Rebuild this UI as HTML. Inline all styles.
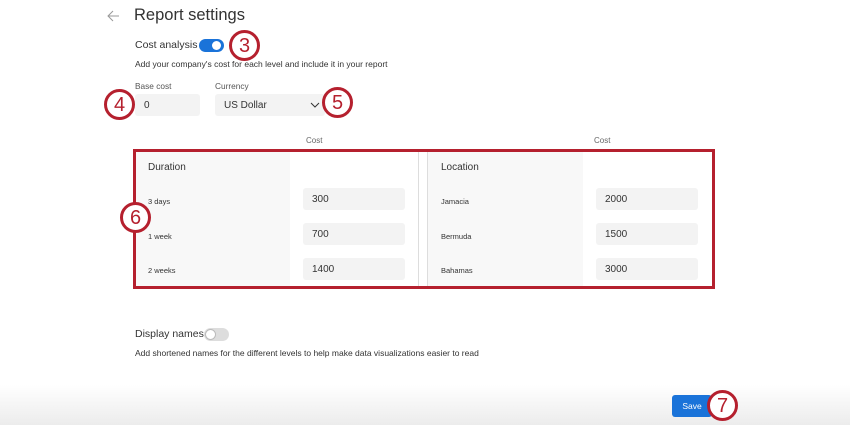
<!DOCTYPE html><html><head><style>
*{box-sizing:border-box;margin:0;padding:0}
body{width:850px;height:425px;overflow:hidden;background:#fff;font-family:"Liberation Sans",sans-serif;color:#333;position:relative}
.a{position:absolute}
.inp{position:absolute;background:#f3f3f3;border-radius:3px;font-size:10px;color:#333;padding-left:9px;display:flex;align-items:center}
.c{position:absolute;width:31px;height:31px;border:3px solid #b5202e;border-radius:50%;background:#fff;color:#b5202e;font-size:20px;display:flex;align-items:center;justify-content:center;padding-top:1px}
.s{font-size:7.5px;color:#333}
</style></head><body>
<div class="a" style="left:0;top:385px;width:850px;height:40px;background:linear-gradient(#fff,#ececec)"></div>
<svg class="a" style="left:106px;top:9px" width="14" height="14" viewBox="0 0 14 14"><path d="M13 7H2M7 2L2 7l5 5" stroke="#999" stroke-width="1" fill="none"/></svg>
<div class="a" style="left:134px;top:6px;font-size:16.5px;color:#333">Report settings</div>
<div class="a" style="left:135px;top:39px;font-size:10.5px">Cost analysis</div>
<div class="a" style="left:199px;top:39px;width:25px;height:13px;border-radius:7px;background:#1a73d9"><div class="a" style="left:13px;top:2px;width:9px;height:9px;border-radius:50%;background:#fff"></div></div>
<div class="a" style="left:135px;top:59px;font-size:8.5px">Add your company's cost for each level and include it in your report</div>
<div class="a" style="left:135px;top:81px;font-size:8.3px;color:#555">Base cost</div>
<div class="a" style="left:215px;top:81px;font-size:8.3px;color:#555">Currency</div>
<div class="inp" style="left:135px;top:94px;width:65px;height:22px">0</div>
<div class="inp" style="left:215px;top:94px;width:110px;height:22px">US Dollar</div>
<svg class="a" style="left:310px;top:101px" width="10" height="8"><path d="M1 2l4 4 4-4" stroke="#333" fill="none"/></svg>
<div class="a" style="left:306px;top:136px;font-size:8px;color:#666">Cost</div>
<div class="a" style="left:594px;top:136px;font-size:8px;color:#666">Cost</div>
<div class="a" style="left:133px;top:149px;width:582px;height:140px;border:3px solid #b5202e;overflow:hidden">
<div class="a" style="left:0;top:0;width:154px;height:140px;background:#f8f8f8"></div>
<div class="a" style="left:282px;top:0;width:1px;height:140px;background:#ddd"></div>
<div class="a" style="left:291px;top:0;width:1px;height:140px;background:#ddd"></div>
<div class="a" style="left:292px;top:0;width:155px;height:140px;background:#f8f8f8"></div>
<div class="a" style="left:12px;top:10px;font-size:10px">Duration</div>
<div class="a" style="left:305px;top:10px;font-size:10px">Location</div>
<div class="a s" style="left:12px;top:45px">3 days</div>
<div class="a s" style="left:12px;top:80px">1 week</div>
<div class="a s" style="left:12px;top:114px">2 weeks</div>
<div class="a s" style="left:305px;top:45px">Jamacia</div>
<div class="a s" style="left:305px;top:80px">Bermuda</div>
<div class="a s" style="left:305px;top:114px">Bahamas</div>
<div class="inp" style="left:167px;top:36px;width:102px;height:22px">300</div>
<div class="inp" style="left:167px;top:71px;width:102px;height:22px">700</div>
<div class="inp" style="left:167px;top:106px;width:102px;height:22px">1400</div>
<div class="inp" style="left:460px;top:36px;width:102px;height:22px">2000</div>
<div class="inp" style="left:460px;top:71px;width:102px;height:22px">1500</div>
<div class="inp" style="left:460px;top:106px;width:102px;height:22px">3000</div>
</div>
<div class="a" style="left:135px;top:328px;font-size:10.5px">Display names</div>
<div class="a" style="left:204px;top:328px;width:25px;height:13px;border-radius:7px;background:#ddd"><div class="a" style="left:1px;top:1px;width:11px;height:11px;border-radius:50%;background:#fff;border:1px solid #bbb"></div></div>
<div class="a" style="left:135px;top:348px;font-size:8.5px">Add shortened names for the different levels to help make data visualizations easier to read</div>
<div class="a" style="left:672px;top:395px;width:40px;height:22px;background:#1a73d9;border-radius:3px;color:#fff;font-size:8.5px;display:flex;align-items:center;justify-content:center">Save</div>
<div class="c" style="left:229px;top:30px">3</div>
<div class="c" style="left:104px;top:89px">4</div>
<div class="c" style="left:322px;top:87px">5</div>
<div class="c" style="left:120px;top:202px">6</div>
<div class="c" style="left:707px;top:390px">7</div>
</body></html>
